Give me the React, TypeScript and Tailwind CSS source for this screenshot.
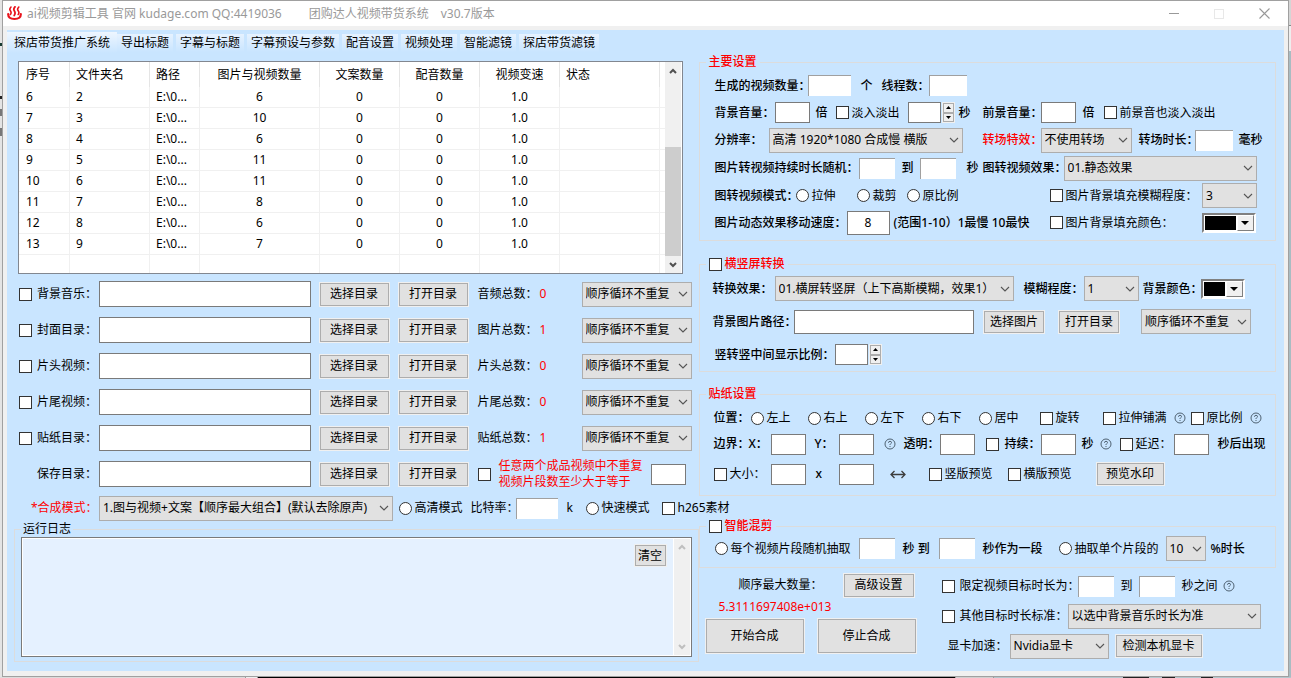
import React from "react";

type Kids = { children?: React.ReactNode };

const COLUMNS = [
  { name: "序号", cls: "w-[51px] pl-[7px] text-left" },
  { name: "文件夹名", cls: "w-[80px] pl-[6px] text-left" },
  { name: "路径", cls: "w-[50px] pl-[6px] text-left" },
  { name: "图片与视频数量", cls: "w-[120px] text-center" },
  { name: "文案数量", cls: "w-[80px] text-center" },
  { name: "配音数量", cls: "w-[80px] text-center" },
  { name: "视频变速", cls: "w-[80px] text-center" },
  { name: "状态", cls: "w-[100px] pl-[6px] text-left" },
];

const FILES = [
  ["6", "2", "E:\\0...", "6", "0", "0", "1.0", ""],
  ["7", "3", "E:\\0...", "10", "0", "0", "1.0", ""],
  ["8", "4", "E:\\0...", "6", "0", "0", "1.0", ""],
  ["9", "5", "E:\\0...", "11", "0", "0", "1.0", ""],
  ["10", "6", "E:\\0...", "11", "0", "0", "1.0", ""],
  ["11", "7", "E:\\0...", "8", "0", "0", "1.0", ""],
  ["12", "8", "E:\\0...", "6", "0", "0", "1.0", ""],
  ["13", "9", "E:\\0...", "7", "0", "0", "1.0", ""],
  ["", "", "", "", "", "", "", ""],
];

const SOURCES = [
  { name: "背景音乐：", total: "音频总数：", count: "0" },
  { name: "封面目录：", total: "图片总数：", count: "1" },
  { name: "片头视频：", total: "片头总数：", count: "0" },
  { name: "片尾视频：", total: "片尾总数：", count: "0" },
  { name: "贴纸目录：", total: "贴纸总数：", count: "1" },
];

const TABS = ["导出标题", "字幕与标题", "字幕预设与参数", "配音设置", "视频处理", "智能滤镜", "探店带货滤镜"];

function Chevron() {
  return (
    <svg viewBox="0 0 10 6" className="h-[6px] w-[10px] text-[#555555]" fill="none" stroke="currentColor" strokeWidth="1.1">
      <path d="M1 1 L5 5 L9 1" />
    </svg>
  );
}

function Arrow({ up = false, className = "text-[#505050]" }: { up?: boolean; className?: string }) {
  return (
    <svg viewBox="0 0 8 6" className={`h-[6px] w-[8px] ${className}`} fill="none" stroke="currentColor" strokeWidth="2">
      <path d={up ? "M1 5 L4 2 L7 5" : "M1 1 L4 4 L7 1"} />
    </svg>
  );
}

function Help() {
  return (
    <svg viewBox="0 0 12 12" className="h-[12px] w-[12px] text-[#4f6272]" fill="none" stroke="currentColor">
      <circle cx="6" cy="6" r="5" />
      <path d="M4.5 4.8 Q4.5 3.3 6 3.3 Q7.5 3.3 7.5 4.6 Q7.5 5.3 6.6 5.8 Q6 6.1 6 7" />
      <path d="M6 8 V9" />
    </svg>
  );
}

function Pick({ label, value, className }: { label: string; value: string; className: string }) {
  return (
    <span className={`relative flex h-[25px] items-center ${className}`}>
      <select
        aria-label={label}
        className="h-full w-full appearance-none border border-[#adadad] bg-[#e1e1e1] pr-[14px] pl-[3px] leading-4"
      >
        <option>{value}</option>
      </select>
      <span className="pointer-events-none absolute right-[4px]">
        <Chevron />
      </span>
    </span>
  );
}

function Field({ label, className, flat = false, value }: { label: string; className: string; flat?: boolean; value?: string }) {
  const edge = flat ? "border-t border-l border-[#a0a0a0]" : "border border-[#7a7a7a]";
  return <input aria-label={label} defaultValue={value} className={`block min-w-0 bg-white text-center ${edge} ${className}`} />;
}

function Check({ children, label }: Kids & { label?: string }) {
  return (
    <label className="flex items-center gap-[3px] whitespace-nowrap">
      <input type="checkbox" aria-label={label} className="h-[13px] w-[13px] shrink-0 appearance-none border border-[#333333] bg-white" />
      {children}
    </label>
  );
}

function Radio({ children, name }: Kids & { name: string }) {
  return (
    <label className="flex items-center gap-[3px] whitespace-nowrap">
      <input type="radio" name={name} className="h-[13px] w-[13px] shrink-0 appearance-none rounded-full border border-[#333333] bg-white" />
      {children}
    </label>
  );
}

function Button({ children, className }: Kids & { className: string }) {
  return (
    <button type="button" className={`border border-[#adadad] bg-[#e1e1e1] leading-4 whitespace-nowrap ring-1 ring-[#f0f0f0] ${className}`}>
      {children}
    </button>
  );
}

function Text({ children, className = "font-medium" }: Kids & { className?: string }) {
  return <span className={`whitespace-nowrap ${className}`}>{children}</span>;
}

function Spinner({ label }: { label: string }) {
  return (
    <span className="flex h-[21px] items-center gap-px">
      <Field label={label} className="h-[21px] w-[33px]" />
      <span className="flex h-[21px] w-[13px] flex-col border border-[#f0f0f0]">
        <button type="button" aria-label="增加" className="flex flex-1 items-center justify-center border border-[#adadad] bg-[#f0f0f0]">
          <svg viewBox="0 0 5 3" className="h-[3px] w-[5px]"><path d="M0 3 L2.5 0 L5 3 Z" /></svg>
        </button>
        <button type="button" aria-label="减少" className="flex flex-1 items-center justify-center border border-[#adadad] bg-[#f0f0f0]">
          <svg viewBox="0 0 5 3" className="h-[3px] w-[5px]"><path d="M0 0 L2.5 3 L5 0 Z" /></svg>
        </button>
      </span>
    </span>
  );
}

function ColorPick({ label, className }: { label: string; className: string }) {
  return (
    <button
      type="button"
      aria-label={label}
      className={`flex h-[20px] border-2 border-t-[#808080] border-r-white border-b-white border-l-[#808080] bg-white ${className}`}
    >
      <span className="m-px flex-1 self-stretch bg-black" />
      <span className="flex h-full w-[17px] items-center justify-center border border-t-white border-r-[#808080] border-b-[#808080] border-l-white bg-[#f0f0f0]">
        <svg viewBox="0 0 8 4" className="h-[4px] w-[8px]"><path d="M0 0 H8 L4 4 Z" /></svg>
      </span>
    </button>
  );
}

function Group({ title, children, className = "", inner }: Kids & { title: React.ReactNode; className?: string; inner: string }) {
  return (
    <fieldset className={`min-w-0 border border-[#dcdcdc] ${className}`}>
      <legend className="ml-[6px] h-4 px-[3px] font-medium text-[#ff0000]">{title}</legend>
      <div className={inner}>{children}</div>
    </fieldset>
  );
}

function TitleBar() {
  return (
    <header className="flex h-[25px] items-center bg-white pr-[18px] pl-[4px] text-[#999999]">
      <svg viewBox="0 0 15 15" className="h-[15px] w-[15px]" fill="none" stroke="#e8141c" strokeLinecap="round">
        <path d="M4 1 Q2 3 3.4 4.8 T3.4 8.5" strokeWidth="1.6" />
        <path d="M8 0.8 Q6 3 7.4 5 T7.2 9.5" strokeWidth="1.8" />
        <path d="M11.8 1 Q9.8 3 11.2 4.8 T11.2 8.5" strokeWidth="1.6" />
        <path d="M1.2 8 Q1 13 7.5 13 Q14 13 13.8 8" strokeWidth="2.2" />
      </svg>
      <h1 className="ml-[5px] flex whitespace-nowrap">
        <span>ai视频剪辑工具 官网 kudage.com QQ:4419036</span>
        <span className="ml-[27px]">团购达人视频带货系统</span>
        <span className="ml-[12px]">v30.7版本</span>
      </h1>
      <div className="ml-auto flex items-center gap-[35px]">
        <button type="button" aria-label="最小化" className="h-px w-[10px] bg-[#999999]" />
        <button type="button" aria-label="最大化" className="h-[10px] w-[10px] border border-[#e8e8e8]" />
        <button type="button" aria-label="关闭">
          <svg viewBox="0 0 11 11" className="h-[11px] w-[11px]" stroke="#999999" strokeWidth="1.1">
            <path d="M0.5 0.5 L10.5 10.5 M10.5 0.5 L0.5 10.5" />
          </svg>
        </button>
      </div>
    </header>
  );
}

function Tabs() {
  return (
    <nav className="flex h-[23px] items-center gap-[3px] pt-[2px] whitespace-nowrap">
      <button type="button" className="-mr-[3px] h-[21px] bg-linear-to-b from-[#eef6ff] to-[#c9e5ff] px-[7px]">探店带货推广系统</button>
      {TABS.map((t) => (
        <button key={t} type="button" className="h-[18px] bg-linear-to-b from-[#e6f2ff] to-[#c9e5ff] px-[4px]">{t}</button>
      ))}
    </nav>
  );
}

function FileTable() {
  return (
    <div className="mr-[9px] ml-[4px] flex h-[213px] overflow-hidden border border-[#828790] bg-white">
      <table className="min-w-0 flex-1 table-fixed border-separate border-spacing-0 self-start">
        <thead>
          <tr className="h-[25px]">
            {COLUMNS.map((c) => (
              <th key={c.name} className={`border-r border-[#e5e5e5] p-0 font-normal ${c.cls}`}>{c.name}</th>
            ))}
            <th className="p-0" />
          </tr>
        </thead>
        <tbody>
          {FILES.map((f, r) => (
            <tr key={r} className="h-[21px]">
              {f.map((v, c) => (
                <td key={c} className={`h-[21px] border-r border-b border-[#f0f0f0] p-0 ${COLUMNS[c].cls}`}>{v}</td>
              ))}
              <td className="border-b border-[#f0f0f0] p-0" />
            </tr>
          ))}
        </tbody>
      </table>
      <div className="mr-px flex w-[16px] shrink-0 flex-col items-center bg-[#f0f0f0]">
        <span className="flex h-[17px] items-center"><Arrow up /></span>
        <span className="h-[68px]" />
        <span className="w-full flex-1 bg-[#cdcdcd]" />
        <span className="flex h-[17px] items-center"><Arrow /></span>
      </div>
    </div>
  );
}

const SOURCE_GRID = "grid grid-rows-[26px] items-center grid-cols-[80px_minmax(80px,1fr)_9px_79px_79px_104px_110px]";

function LeftPanel() {
  return (
    <section className="min-w-0 pt-[8px] pl-[7px]">
      <FileTable />
      <div className="mt-[7px] flex flex-col gap-[10px] pl-[5px]">
        {SOURCES.map((s) => (
          <div key={s.name} className={SOURCE_GRID}>
            <Check><span className="pl-[2px]">{s.name}</span></Check>
            <Field label={s.name} className="h-[26px] w-full" />
            <span />
            <Button className="h-[23px] w-[69px]">选择目录</Button>
            <Button className="h-[23px] w-[69px]">打开目录</Button>
            <span className="flex gap-[2px] whitespace-nowrap"><span>{s.total}</span><b className="font-normal text-[#ff0000]">{s.count}</b></span>
            <Pick label={s.total} value="顺序循环不重复" className="w-[110px]" />
          </div>
        ))}
        <div className={SOURCE_GRID}>
          <span className="pl-[18px]">保存目录：</span>
          <Field label="保存目录" className="h-[26px] w-full" />
          <span />
          <Button className="h-[23px] w-[69px]">选择目录</Button>
          <Button className="h-[23px] w-[69px]">打开目录</Button>
          <span className="col-span-2 flex items-center gap-[8px]">
            <Check label="不重复片段数" />
            <span className="text-[#ff0000]">任意两个成品视频中不重复<br />视频片段数至少大于等于</span>
            <Field label="片段数" className="h-[21px] w-[35px]" />
          </span>
        </div>
      </div>
      <div className="mt-[8px] grid h-[26px] grid-cols-[80px_minmax(0,1fr)_6px_72px_45px_51px_19px_76px_30px] items-center pl-[5px]">
        <span className="pl-[12px] whitespace-nowrap text-[#ff0000]">*合成模式：</span>
        <Pick label="合成模式" value="1.图与视频+文案【顺序最大组合】(默认去除原声)" className="w-full" />
        <span />
        <Radio name="quality">高清模式</Radio>
        <Text className="">比特率：</Text>
        <Field label="比特率" flat className="h-[21px] w-[42px]" />
        <span>k</span>
        <Radio name="quality">快速模式</Radio>
        <Check>h265素材</Check>
      </div>
      <fieldset className="relative -mr-[7px] border border-[#dcdcdc] px-[6px] pb-[4px]">
        <legend className="h-4 px-[2px]">运行日志</legend>
        <div className="flex h-[120px] border border-[#7a7a7a] bg-white p-px">
          <textarea aria-label="运行日志" className="min-w-0 flex-1 resize-none bg-[#e5f1ff]" />
          <div className="ml-px flex w-[16px] flex-col items-center justify-between bg-[#f0f0f0] py-[5px]">
            <Arrow up className="text-[#bfbfbf]" />
            <Arrow className="text-[#bfbfbf]" />
          </div>
        </div>
        <Button className="absolute top-[8px] right-[32px] h-[21px] w-[31px]">清空</Button>
      </fieldset>
    </section>
  );
}

function MainSettings() {
  return (
    <Group title="主要设置" inner="pt-[2px] pb-[4px] pl-[15px]">
      <div className="grid h-[27px] grid-cols-[93px_53px_21px_47px_1fr] items-center">
        <Text>生成的视频数量：</Text>
        <Field label="生成的视频数量" flat className="h-[21px] w-[43px]" />
        <Text>个</Text>
        <Text>线程数：</Text>
        <Field label="线程数" flat className="h-[21px] w-[38px]" />
      </div>
      <div className="grid h-[27px] grid-cols-[60px_41px_20px_72px_51px_24px_58px_42px_21px_1fr] items-center">
        <Text>背景音量：</Text>
        <Field label="背景音量" className="h-[21px] w-[35px]" />
        <Text>倍</Text>
        <Check>淡入淡出</Check>
        <Spinner label="淡入淡出秒数" />
        <Text>秒</Text>
        <Text>前景音量：</Text>
        <Field label="前景音量" className="h-[21px] w-[35px]" />
        <Text>倍</Text>
        <Check>前景音也淡入淡出</Check>
      </div>
      <div className="grid h-[28px] grid-cols-[54px_214px_58px_98px_56px_44px_1fr] items-center">
        <Text>分辨率：</Text>
        <Pick label="分辨率" value="高清 1920*1080 合成慢 横版" className="w-[194px]" />
        <Text className="font-medium text-[#ff0000]">转场特效：</Text>
        <Pick label="转场特效" value="不使用转场" className="w-[91px]" />
        <Text>转场时长：</Text>
        <Field label="转场时长" flat className="h-[21px] w-[38px]" />
        <Text>毫秒</Text>
      </div>
      <div className="grid h-[28px] grid-cols-[144px_43px_18px_47px_16px_81px_1fr] items-center pr-[18px]">
        <Text>图片转视频持续时长随机：</Text>
        <Field label="时长下限" flat className="h-[21px] w-[36px]" />
        <Text>到</Text>
        <Field label="时长上限" flat className="h-[21px] w-[36px]" />
        <Text>秒</Text>
        <Text>图转视频效果：</Text>
        <Pick label="图转视频效果" value="01.静态效果" className="w-full" />
      </div>
      <div className="grid h-[27px] grid-cols-[81px_61px_50px_143px_1fr_55px] items-center pr-[18px]">
        <Text>图转视频模式：</Text>
        <Radio name="fit">拉伸</Radio>
        <Radio name="fit">裁剪</Radio>
        <Radio name="fit">原比例</Radio>
        <Check>图片背景填充模糊程度：</Check>
        <Pick label="填充模糊程度" value="3" className="w-[55px]" />
      </div>
      <div className="grid h-[27px] grid-cols-[132px_47px_156px_1fr_55px] items-center pr-[18px]">
        <Text>图片动态效果移动速度：</Text>
        <Field label="移动速度" value="8" className="h-[24px] w-[43px]" />
        <Text>(范围1-10）1最慢 10最快</Text>
        <Check>图片背景填充颜色：</Check>
        <ColorPick label="填充颜色" className="w-[54px]" />
      </div>
    </Group>
  );
}

function Orientation() {
  return (
    <Group title={<Check>横竖屏转换</Check>} className="mt-[15px]" inner="pl-[13px]">
      <div className="grid h-[33px] grid-cols-[62px_249px_60px_59px_58px_1fr] items-center">
        <Text>转换效果：</Text>
        <Pick label="转换效果" value="01.横屏转竖屏（上下高斯模糊，效果1）" className="w-[239px]" />
        <Text>模糊程度：</Text>
        <Pick label="模糊程度" value="1" className="w-[55px]" />
        <Text>背景颜色：</Text>
        <ColorPick label="背景颜色" className="w-[44px]" />
      </div>
      <div className="grid h-[33px] grid-cols-[81px_1fr_10px_75px_82px_110px] items-center pr-[24px]">
        <Text>背景图片路径：</Text>
        <Field label="背景图片路径" className="h-[24px] w-full" />
        <span />
        <Button className="h-[22px] w-[60px]">选择图片</Button>
        <Button className="h-[22px] w-[60px]">打开目录</Button>
        <Pick label="背景图片顺序" value="顺序循环不重复" className="w-[110px]" />
      </div>
      <div className="grid h-[33px] grid-cols-[120px_1fr] items-center pl-[2px]">
        <Text>竖转竖中间显示比例：</Text>
        <Spinner label="中间显示比例" />
      </div>
    </Group>
  );
}

function Sticker() {
  return (
    <Group title="贴纸设置" className="mt-[14px]" inner="pt-[3px] pb-[4px] pl-[14px]">
      <div className="grid h-[26px] grid-cols-[37px_57px_57px_57px_57px_61px_63px_71px_17px_59px_1fr] items-center">
        <Text>位置：</Text>
        <Radio name="place">左上</Radio>
        <Radio name="place">右上</Radio>
        <Radio name="place">左下</Radio>
        <Radio name="place">右下</Radio>
        <Radio name="place">居中</Radio>
        <Check>旋转</Check>
        <Check>拉伸铺满</Check>
        <Help />
        <Check>原比例</Check>
        <Help />
      </div>
      <div className="grid h-[26px] grid-cols-[35px_22px_44px_24px_45px_20px_36px_46px_55px_41px_18px_20px_54px_44px_1fr] items-center">
        <Text>边界：</Text>
        <Text>X：</Text>
        <Field label="X" className="h-[21px] w-[35px]" />
        <Text>Y：</Text>
        <Field label="Y" className="h-[21px] w-[35px]" />
        <Help />
        <Text>透明：</Text>
        <Field label="透明" className="h-[21px] w-[35px]" />
        <Check><span className="pl-[3px] font-medium">持续：</span></Check>
        <Field label="持续" className="h-[21px] w-[35px]" />
        <Text>秒</Text>
        <Help />
        <Check>延迟：</Check>
        <Field label="延迟" className="h-[21px] w-[35px]" />
        <Text>秒后出现</Text>
      </div>
      <div className="grid h-[34px] grid-cols-[57px_45px_23px_51px_39px_79px_89px_1fr] items-center">
        <Check>大小：</Check>
        <Field label="宽" className="h-[21px] w-[35px]" />
        <Text>x</Text>
        <Field label="高" className="h-[21px] w-[35px]" />
        <svg viewBox="0 0 16 9" className="h-[9px] w-[16px]" fill="none" stroke="#3c3c3c" strokeWidth="1.3">
          <path d="M1 4.5 H15 M4.5 1 L1 4.5 L4.5 8 M11.5 1 L15 4.5 L11.5 8" />
        </svg>
        <Check>竖版预览</Check>
        <Check>横版预览</Check>
        <Button className="h-[22px] w-[67px]">预览水印</Button>
      </div>
    </Group>
  );
}

function SmartCut() {
  return (
    <Group title={<Check>智能混剪</Check>} className="mt-[22px]" inner="pb-[4px] pl-[15px]">
      <div className="grid h-[29px] grid-cols-[144px_44px_36px_44px_76px_107px_45px_1fr] items-center">
        <Radio name="cut">每个视频片段随机抽取</Radio>
        <Field label="最短秒数" flat className="h-[21px] w-[36px]" />
        <Text>秒 到</Text>
        <Field label="最长秒数" flat className="h-[21px] w-[36px]" />
        <Text>秒作为一段</Text>
        <Radio name="cut">抽取单个片段的</Radio>
        <Pick label="片段百分比" value="10" className="w-[40px]" />
        <Text>%时长</Text>
      </div>
    </Group>
  );
}

function Actions() {
  return (
    <div className="mt-[3px] grid grid-cols-[236px_1fr] pl-[7px]">
      <div>
        <div className="flex h-[28px] items-center justify-between pr-[28px] pl-[33px]">
          <span>顺序最大数量：</span>
          <Button className="h-[23px] w-[70px]">高级设置</Button>
        </div>
        <p className="mb-[4px] pl-[13px] text-[#ff0000]">5.3111697408e+013</p>
        <div className="flex gap-[14px]">
          <Button className="h-[34px] w-[98px]">开始合成</Button>
          <Button className="h-[34px] w-[98px]">停止合成</Button>
        </div>
      </div>
      <div>
        <div className="grid h-[30px] grid-cols-[136px_43px_18px_43px_41px_1fr] items-center">
          <Check><span className="pl-[2px]">限定视频目标时长为：</span></Check>
          <Field label="目标时长下限" flat className="h-[21px] w-[36px]" />
          <Text className="">到</Text>
          <Field label="目标时长上限" flat className="h-[21px] w-[36px]" />
          <Text className="">秒之间</Text>
          <Help />
        </div>
        <div className="grid h-[30px] grid-cols-[126px_1fr] items-center pr-[15px]">
          <Check><span className="pl-[2px]">其他目标时长标准：</span></Check>
          <Pick label="其他目标时长标准" value="以选中背景音乐时长为准" className="w-full" />
        </div>
        <div className="grid h-[30px] grid-cols-[68px_106px_1fr] items-center">
          <span className="pl-[6px]">显卡加速：</span>
          <Pick label="显卡加速" value="Nvidia显卡" className="w-[99px]" />
          <Button className="h-[22px] w-[86px]">检测本机显卡</Button>
        </div>
      </div>
    </div>
  );
}

export default function App() {
  return (
    <div className="flex min-h-screen flex-col bg-[#b4c6cc] font-['Noto_Sans','Noto_Sans_CJK_SC',sans-serif] text-[12px] leading-4 text-black">
      <div className="flex">
        <div className="flex w-[2px] shrink-0 flex-col bg-[#e4e4e4] pt-[43px]">
          <span className="h-[3px] bg-[#173a30]" />
          <span className="mt-[50px] h-[3px] bg-[#222222]" />
          <span className="mt-[10px] h-[7px] bg-[#777777]" />
          <span className="mt-[12px] h-[8px] bg-[#777777]" />
        </div>
        <main className="min-w-0 flex-1 border border-[#a0a0a0] bg-[#f0f0f0]">
          <TitleBar />
          <div className="mx-[4px] mt-[4px] mb-[5px] bg-[#c9e5ff]">
            <Tabs />
            <div className="grid grid-cols-[minmax(0,684fr)_minmax(0,592fr)] pb-[9px]">
              <LeftPanel />
              <section className="min-w-0 pt-px pr-[8px] pl-[7px]">
                <MainSettings />
                <Orientation />
                <Sticker />
                <SmartCut />
                <Actions />
              </section>
            </div>
          </div>
        </main>
        <div className="flex w-[2px] shrink-0 flex-col bg-[#a9bcc2]">
          <span className="h-[25px] bg-[#d5d5d5]" />
          <span className="h-px bg-[#888888]" />
          <span className="h-[25px] bg-[#eeeeee]" />
        </div>
      </div>
      <div className="flex min-h-[2px] flex-1">
        <span className="w-[19%] bg-[#dcdcdc]" />
        <span className="w-[1%] border-x border-[#999999] bg-[#eeeeee]" />
        <span className="w-[54%] bg-black" />
        <span className="w-[3%] border-x border-[#999999] bg-[#d0d0d0]" />
        <span className="w-[10%]" />
        <span className="w-[2%] bg-[#222222]" />
        <span className="w-[1%]" />
        <span className="w-[1%] bg-[#222222]" />
        <span className="w-[2%]" />
        <span className="w-[1%] bg-[#222222]" />
      </div>
    </div>
  );
}
